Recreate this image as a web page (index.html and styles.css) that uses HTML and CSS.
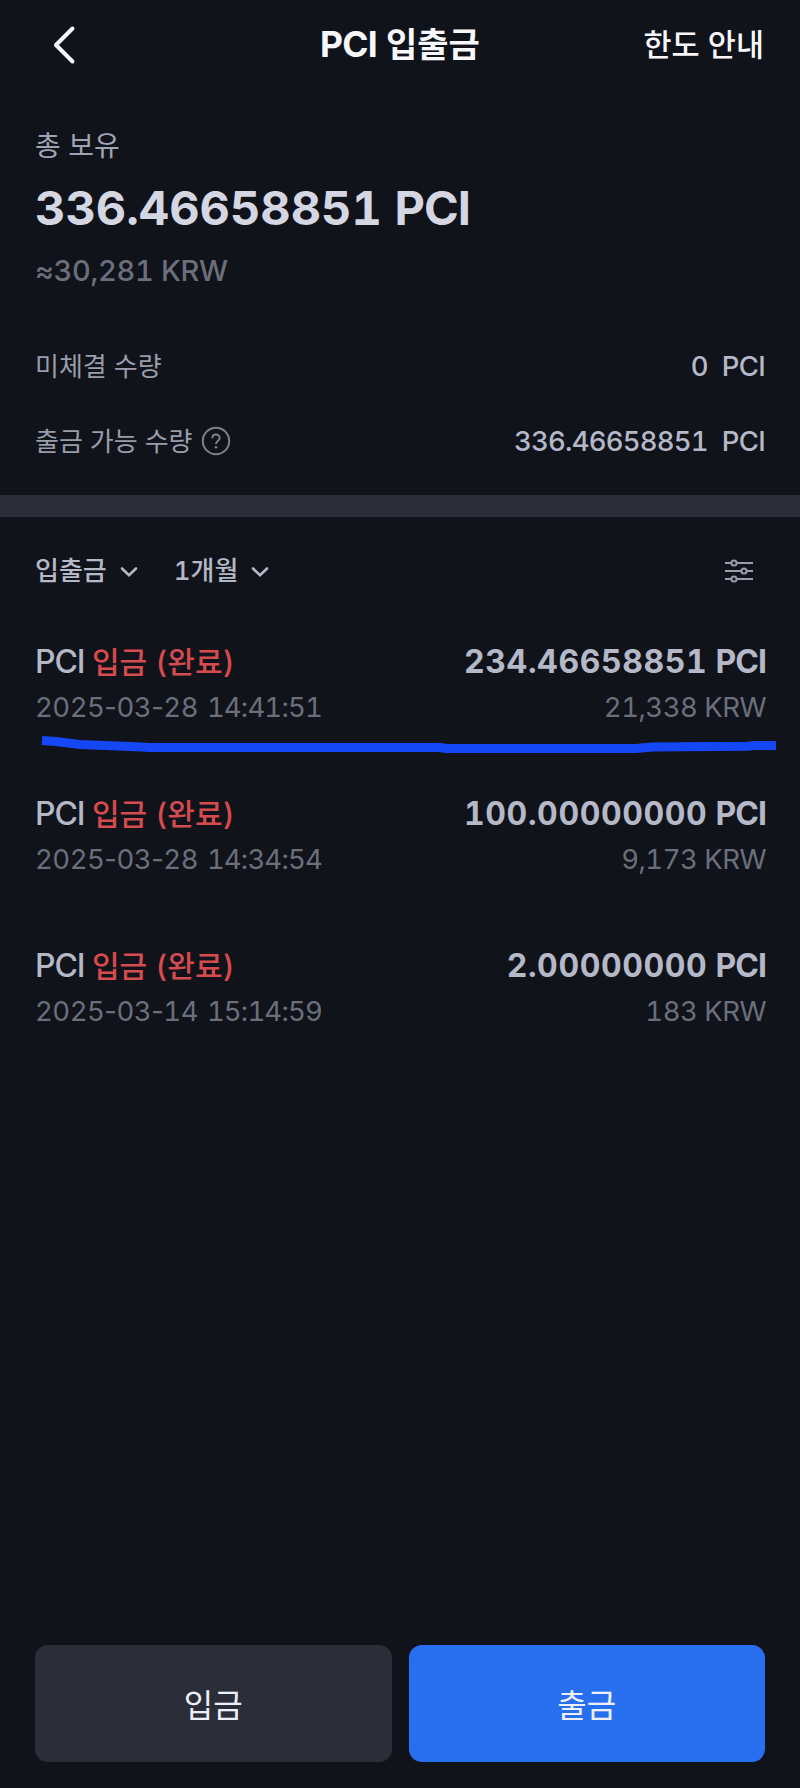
FILE: index.html
```html
<!DOCTYPE html>
<html lang="ko">
<head>
  <meta charset="UTF-8">
  <meta name="viewport" content="width=device-width, initial-scale=1.0">
  <title>PCI 입출금</title>
  <link rel="stylesheet" href="styles.css">
</head>
<body>

<div class="header">
  <a class="back">
    <svg width="24" height="42" viewBox="0 0 24 42"><path d="M20.5 4.5 L4 21 L20.5 37.5"/></svg>
  </a>
  <h1><span class="ticker">PCI</span> 입출금</h1>
  <a class="limit">한도 안내</a>
</div>

<!-- 보유 현황 -->
<div class="summary">
  <div class="summary-label">총 보유</div>
  <div class="summary-total">336.46658851 <span class="unit">PCI</span></div>
  <div class="summary-krw">≈30,281 KRW</div>
  <div class="summary-row">
    <span class="name">미체결 수량</span>
    <span class="value">0</span>
    <span class="unit">PCI</span>
  </div>
  <div class="summary-row">
    <span class="name">출금 가능 수량</span>
    <svg class="help" width="30" height="30" viewBox="0 0 30 30">
      <circle cx="15" cy="15" r="13.2"/>
      <path d="M11.3 12.2 C11.3 7.4 18.7 7.4 18.7 12 C18.7 14.7 15 14.8 15 18"/>
      <circle class="dot" cx="15" cy="21.3" r="1.3"/>
    </svg>
    <span class="value">336.46658851</span>
    <span class="unit">PCI</span>
  </div>
</div>

<div class="divider"></div>

<!-- 필터 -->
<div class="filters">
  <a class="filter">입출금
    <svg width="20" height="14" viewBox="0 0 20 14"><path d="M3 3.5 L10 10.3 L17 3.5"/></svg>
  </a>
  <a class="filter">1개월
    <svg width="20" height="14" viewBox="0 0 20 14"><path d="M3 3.5 L10 10.3 L17 3.5"/></svg>
  </a>
  <svg class="settings" width="28" height="24" viewBox="0 0 28 24">
    <path d="M0 4 H6.4 M11.6 4 H28 M0 12 H16.4 M21.6 12 H28 M0 20 H6.4 M11.6 20 H28"/>
    <circle cx="9" cy="4" r="2.6"/>
    <circle cx="19" cy="12" r="2.6"/>
    <circle cx="9" cy="20" r="2.6"/>
  </svg>
</div>

<!-- 내역 -->
<div class="history">
  <div class="item">
    <div class="item-main">
      <span class="item-title">PCI <b>입금 (완료)</b></span>
      <span class="item-amount">234.46658851 <span class="unit">PCI</span></span>
    </div>
    <div class="item-sub">
      <span class="date">2025<i>-</i>03<i>-</i>28 <span class="time">14<i>:</i>41<i>:</i>51</span></span>
      <span class="krw">21,338 KRW</span>
    </div>
    <svg class="marker" width="740" height="20" viewBox="0 0 740 20">
      <path d="M6 7.5 L20 8.5 L44 11.5 L94 13.5 L114 14.5 L404 14.5 L410 15.5 L600 15.5 L616 14 L712 13.2 L718 12.5 L740 12.5"/>
    </svg>
  </div>
  <div class="item">
    <div class="item-main">
      <span class="item-title">PCI <b>입금 (완료)</b></span>
      <span class="item-amount">100.00000000 <span class="unit">PCI</span></span>
    </div>
    <div class="item-sub">
      <span class="date">2025<i>-</i>03<i>-</i>28 <span class="time">14<i>:</i>34<i>:</i>54</span></span>
      <span class="krw">9,173 KRW</span>
    </div>
  </div>
  <div class="item">
    <div class="item-main">
      <span class="item-title">PCI <b>입금 (완료)</b></span>
      <span class="item-amount">2.00000000 <span class="unit">PCI</span></span>
    </div>
    <div class="item-sub">
      <span class="date">2025<i>-</i>03<i>-</i>14 <span class="time">15<i>:</i>14<i>:</i>59</span></span>
      <span class="krw">183 KRW</span>
    </div>
  </div>
</div>

<div class="actions">
  <button class="deposit">입금</button>
  <button class="withdraw">출금</button>
</div>

</body>
</html>
```

FILE: styles.css
```css
:root {
  --background: #10131a;
  --panel: #2b2e39;
  --primary: #286ff0;
  --red: #d54b4e;
  --text: #b4b8c7;
  --muted: #6b6f7c;
}

* {
  box-sizing: border-box;
}

body {
  font-family: Inter, 'Noto Sans CJK KR', sans-serif;
  font-variant-numeric: tabular-nums;
  margin: 0;
  height: 1788px;
  display: flex;
  flex-direction: column;
  background: var(--background);
  color: var(--text);
  white-space: nowrap;
}

svg {
  display: block;
  fill: none;
  stroke: currentColor;
}

/* 상단 바 */
.header {
  display: grid;
  grid-template-columns: 1fr auto 1fr;
  align-items: center;
  height: 88px;
  padding: 1px 36px 0;
  color: #f7f8fc;
}

.header h1 {
  margin: 0;
  font-size: 34px;
  line-height: 48px;
  font-weight: 700;
}

.header .ticker {
  font-size: 35.5px;
  line-height: 1;
  letter-spacing: -0.8px;
}

.back {
  margin-left: 16px;
}

.back svg {
  stroke-width: 4;
  stroke-linecap: round;
  stroke-linejoin: round;
}

.limit {
  justify-self: end;
  font-size: 30.5px;
  line-height: 48px;
  font-weight: 500;
}

/* 보유 현황 */
.summary {
  padding: 39px 35px 34px;
}

.summary-label {
  font-size: 28px;
  line-height: 38px;
  margin-bottom: 15px;
  color: #a0a4b2;
}

.summary-total {
  font-size: 47px;
  line-height: 56px;
  font-weight: 700;
  color: #d4d7e2;
}

.summary-total .unit {
  letter-spacing: -1px;
}

.summary-krw {
  margin: 15px 0 55px;
  font-size: 29px;
  line-height: 40px;
  font-weight: 500;
  letter-spacing: -0.3px;
  color: var(--muted);
}

.summary-row {
  display: flex;
  align-items: center;
  height: 40px;
}

.summary-row + .summary-row {
  margin-top: 35px;
}

.summary-row .name {
  font-size: 26px;
  line-height: 42px;
  padding-top: 1px;
  color: #9a9daa;
}

.summary-row .value {
  margin-left: auto;
  font-size: 27.5px;
  font-weight: 500;
  letter-spacing: -0.8px;
}

.summary-row .unit {
  margin-left: 14px;
  font-size: 27.5px;
  font-weight: 500;
  letter-spacing: -0.7px;
}

.help {
  margin-left: 8px;
  color: #7d808d;
  stroke-width: 2;
}

.help .dot {
  fill: currentColor;
  stroke: none;
}

.divider {
  height: 22px;
  background: var(--panel);
}

/* 필터 */
.filters {
  display: flex;
  align-items: center;
  height: 40px;
  margin-top: 34px;
  padding: 0 47px 0 35px;
}

.filter {
  display: flex;
  align-items: center;
  gap: 12px;
  margin-right: 35px;
  font-size: 26px;
  line-height: 40px;
  font-weight: 500;
}

.filter svg {
  margin-top: 2px;
  stroke-width: 2.6;
  stroke-linecap: round;
}

.settings {
  margin-left: auto;
  stroke-width: 2;
  color: #9a9dab;
}

/* 내역 */
.history {
  margin-top: 48px;
  display: flex;
  flex-direction: column;
  gap: 64px;
}

.item {
  position: relative;
  padding: 0 34px 0 35px;
}

.item-main,
.item-sub {
  display: flex;
  justify-content: space-between;
}

.item-main {
  font-size: 32px;
  line-height: 46px;
}

.item-title {
  font-weight: 500;
  letter-spacing: -1.1px;
}

.item-title b {
  font-size: 30px;
  line-height: 1;
  font-weight: 500;
  letter-spacing: 0.1px;
  color: var(--red);
}

.item-amount {
  font-weight: 700;
  letter-spacing: 0.6px;
}

.item-main .unit {
  margin-left: -1px;
  letter-spacing: -1px;
}

.item-sub {
  margin-top: 2px;
  font-size: 27.5px;
  line-height: 40px;
  letter-spacing: -0.5px;
  color: var(--muted);
}

.date {
  word-spacing: 2px;
}

.date .time {
  letter-spacing: -1px;
}

.date i {
  font-style: normal;
  font-variant-numeric: normal;
}

/* 손으로 그은 밑줄 */
.marker {
  position: absolute;
  top: 94px;
  left: 36px;
  color: #1647f7;
  stroke-width: 9;
  stroke-linejoin: round;
}

/* 하단 버튼 */
.actions {
  display: grid;
  grid-template-columns: 1fr 1fr;
  gap: 17px;
  margin-top: auto;
  padding: 0 35px 26px;
}

.actions button {
  height: 117px;
  padding: 0 0 2px;
  border: none;
  border-radius: 13px;
  font-family: inherit;
  font-size: 32px;
  color: #edf0fa;
}

.deposit {
  background: var(--panel);
}

.withdraw {
  background: var(--primary);
}
```
